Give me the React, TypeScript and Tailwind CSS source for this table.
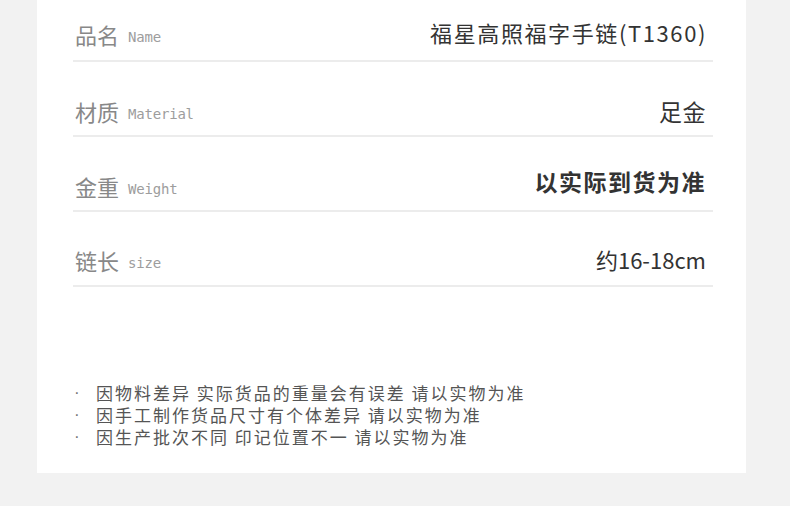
const CJK = "font-['Noto_Sans_CJK_SC','Noto_Sans',sans-serif]";

type Spec = {
  label: string;
  en: string;
  value: string;
  rowClass: string;
  valueClass: string;
};

const SPECS: Spec[] = [
  {
    label: "品名",
    en: "Name",
    value: "福星高照福字手链(T1360)",
    rowClass: "h-[60px] pb-[14px]",
    valueClass: "text-[22px] tracking-[1.6px] -translate-y-[2px] -mr-[1px]",
  },
  { label: "材质", en: "Material", value: "足金", rowClass: "h-[73px] pb-[12px]", valueClass: "text-[23px] tracking-[0.5px]" },
  {
    label: "金重",
    en: "Weight",
    value: "以实际到货为准",
    rowClass: "h-[73px] pb-[12px]",
    valueClass: "text-[23px] font-bold tracking-[1.5px] -translate-y-[5px]",
  },
  { label: "链长", en: "size", value: "约16-18cm", rowClass: "h-[73px] pb-[13px]", valueClass: "text-[22px] -translate-y-[1px]" },
];

const NOTES = [
  "因物料差异 实际货品的重量会有误差 请以实物为准",
  "因手工制作货品尺寸有个体差异 请以实物为准",
  "因生产批次不同 印记位置不一 请以实物为准",
];

export default function App() {
  return (
    <div className={`h-[506px] w-[790px] bg-[#f2f2f2] ${CJK}`}>
      <div className="ml-[37px] h-[473px] w-[709px] bg-white pl-[36px]">
        <div className="w-[640px]">
          {SPECS.map((spec) => (
            <SpecRow key={spec.label} spec={spec} />
          ))}
        </div>

        <ul className="mt-[95px] text-[17px] leading-[22px] tracking-[2px] text-[#555]">
          {NOTES.map((note) => (
            <li key={note} className="flex">
              <span className="w-[23px] pl-[1px] font-['Liberation_Sans',sans-serif] text-[#777]">·</span>
              <span>{note}</span>
            </li>
          ))}
        </ul>
      </div>
    </div>
  );
}

function SpecRow({ spec }: { spec: Spec }) {
  return (
    <div>
      <div className={`flex items-end justify-between pl-[2px] pr-[7px] ${spec.rowClass}`}>
        <div className="flex items-end gap-[9px] leading-[24px]">
          <span className="text-[22px] text-[#888]">{spec.label}</span>
          <span className="-mb-[1px] font-['DejaVu_Sans_Mono','Liberation_Mono',monospace] text-[14px] leading-[20px] tracking-[-0.2px] text-[#9d9d9d]">
            {spec.en}
          </span>
        </div>
        <span className={`leading-[24px] text-[#333] ${spec.valueClass}`}>{spec.value}</span>
      </div>
      <div className="h-[2px] bg-[#ececec]" />
    </div>
  );
}
